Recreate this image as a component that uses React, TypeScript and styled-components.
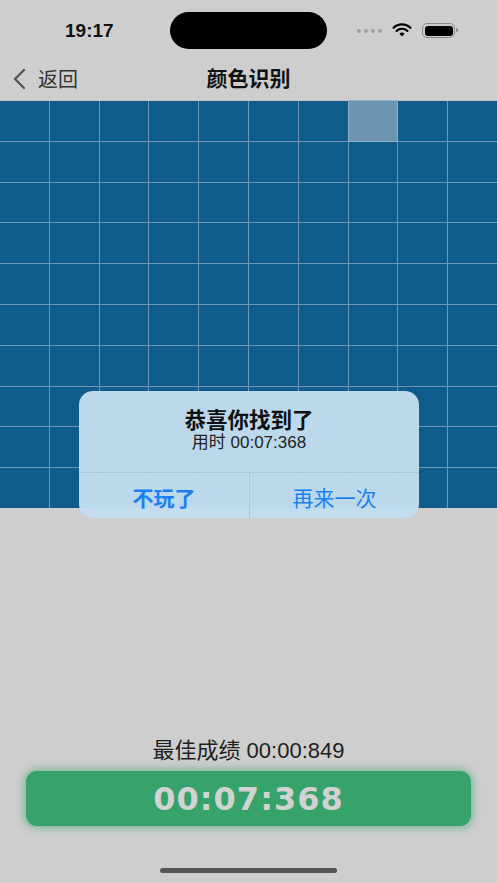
import styled, { createGlobalStyle } from 'styled-components'

const GlobalStyle = createGlobalStyle`
  html, body {
    margin: 0;
    padding: 0;
    background: #cecece;
  }
  * {
    box-sizing: border-box;
  }
`

const FONT = `"Liberation Sans", "Noto Sans CJK SC", sans-serif`

const ROWS = 10
const COLS = 10
const TARGET = { row: 0, col: 7 }

const App = () => {
  const cells = []
  for (let r = 0; r < ROWS; r++) {
    for (let c = 0; c < COLS; c++) {
      cells.push(
        <Cell key={`${r}-${c}`} $target={r === TARGET.row && c === TARGET.col} />
      )
    }
  }

  return (
    <>
      <GlobalStyle />
      <Screen>
        <StatusBar>
          <Clock>19:17</Clock>
          <Island />
          <StatusIcons>
            <Dots>
              <i />
              <i />
              <i />
              <i />
            </Dots>
            <svg width="20" height="15" viewBox="0 0 20 15">
              <path d="M10 13.5l2.6-2.8a3.8 3.8 0 0 0-5.2 0z" fill="#000" />
              <path
                d="M4.6 7.9a7.8 7.8 0 0 1 10.8 0"
                stroke="#000"
                strokeWidth="2.2"
                fill="none"
                strokeLinecap="round"
              />
              <path
                d="M1.6 4.8a12 12 0 0 1 16.8 0"
                stroke="#000"
                strokeWidth="2.2"
                fill="none"
                strokeLinecap="round"
              />
            </svg>
            <Battery>
              <span />
            </Battery>
          </StatusIcons>
        </StatusBar>

        <NavBar>
          <BackButton>
            <svg width="16" height="22" viewBox="0 0 16 22">
              <path
                d="M13 2L4 11l9 9"
                stroke="#555"
                strokeWidth="2.4"
                fill="none"
                strokeLinecap="round"
                strokeLinejoin="round"
              />
            </svg>
            <span>返回</span>
          </BackButton>
          <NavTitle>颜色识别</NavTitle>
        </NavBar>

        <Board>
          <Grid>{cells}</Grid>
          <Alert>
            <AlertBody>
              <AlertTitle>恭喜你找到了</AlertTitle>
              <AlertMessage>用时 00:07:368</AlertMessage>
            </AlertBody>
            <AlertActions>
              <AlertButton $bold>不玩了</AlertButton>
              <AlertButton>再来一次</AlertButton>
            </AlertActions>
          </Alert>
        </Board>

        <Footer>
          <BestScore>最佳成绩 00:00:849</BestScore>
          <TimerButton>00:07:368</TimerButton>
        </Footer>
        <HomeIndicator />
      </Screen>
    </>
  )
}

export default App

const Screen = styled.div`
  width: 497px;
  height: 883px;
  background: #cecece;
  display: flex;
  flex-direction: column;
  font-family: ${FONT};
  overflow: hidden;
`

const StatusBar = styled.div`
  height: 58px;
  display: flex;
  align-items: center;
  padding: 0 42px 0 65px;
`

const Clock = styled.span`
  font-size: 19px;
  font-weight: 700;
  color: #111;
  width: 105px;
  padding-top: 4px;
`

const Island = styled.div`
  width: 157px;
  height: 37px;
  border-radius: 19px;
  background: #000;
  margin-top: 3px;
`

const StatusIcons = styled.div`
  margin-left: auto;
  display: flex;
  align-items: center;
  gap: 10px;
  padding-top: 3px;
`

const Dots = styled.div`
  display: flex;
  gap: 3px;

  i {
    width: 4px;
    height: 4px;
    border-radius: 50%;
    background: #a0a0a0;
  }
`

const Battery = styled.div`
  width: 33px;
  height: 15px;
  border: 1.5px solid #8a8a8a;
  border-radius: 5px;
  padding: 1.5px;
  position: relative;

  span {
    display: block;
    width: 100%;
    height: 100%;
    background: #000;
    border-radius: 3px;
  }

  &::after {
    content: '';
    position: absolute;
    right: -4px;
    top: 4px;
    width: 2px;
    height: 4px;
    border-radius: 0 2px 2px 0;
    background: #8a8a8a;
  }
`

const NavBar = styled.div`
  height: 42px;
  position: relative;
  display: flex;
  align-items: center;
  justify-content: center;
  padding-bottom: 4px;
`

const BackButton = styled.div`
  position: absolute;
  left: 11px;
  top: 6px;
  display: flex;
  align-items: center;
  gap: 11px;
  font-size: 20px;
  color: #333;
`

const NavTitle = styled.div`
  font-size: 21px;
  font-weight: 700;
  color: #111;
`

const Board = styled.div`
  position: relative;
  border-top: 1px solid #c0c0c0;
`

const Grid = styled.div`
  display: grid;
  grid-template-columns: repeat(${COLS}, 1fr);
  grid-template-rows: repeat(${ROWS}, 1fr);
  gap: 1px;
  height: 407px;
  background: #6f95b3;
`

const Cell = styled.div<{ $target?: boolean }>`
  background: ${(p) => (p.$target ? '#6e95b0' : '#0f5b8b')};
  box-shadow: ${(p) => (p.$target ? '0 0 0 1px #8fb0c8' : 'none')};
`

const Alert = styled.div`
  position: absolute;
  left: 79px;
  top: 290px;
  width: 340px;
  border-radius: 14px;
  background: rgba(194, 221, 238, 0.97);
  overflow: hidden;
`

const AlertBody = styled.div`
  height: 82px;
  display: flex;
  flex-direction: column;
  align-items: center;
  padding-top: 18px;
  border-bottom: 1px solid #a9c8dc;
`

const AlertTitle = styled.div`
  font-size: 21.5px;
  line-height: 24px;
  font-weight: 700;
  color: #111;
`

const AlertMessage = styled.div`
  font-size: 17px;
  line-height: 20px;
  color: #222;
`

const AlertActions = styled.div`
  display: grid;
  grid-template-columns: 1fr 1fr;
  height: 45px;

  & > * + * {
    border-left: 1px solid #a9c8dc;
  }
`

const AlertButton = styled.div<{ $bold?: boolean }>`
  display: flex;
  align-items: center;
  justify-content: center;
  font-size: 21px;
  font-weight: ${(p) => (p.$bold ? 700 : 400)};
  color: #1a80f2;
  padding-top: 2px;
`

const Footer = styled.div`
  margin-top: auto;
  display: flex;
  flex-direction: column;
  align-items: center;
  gap: 8px;
  padding: 0 26px;
`

const BestScore = styled.div`
  font-size: 22px;
  color: #1e1e1e;
  line-height: 24px;
`

const TimerButton = styled.div`
  width: 100%;
  height: 55px;
  border-radius: 11px;
  background: #36a36a;
  box-shadow: 0 0 8px 2px rgba(54, 163, 106, 0.55);
  display: flex;
  align-items: center;
  justify-content: center;
  font-family: "DejaVu Sans", sans-serif;
  font-size: 32px;
  font-weight: 700;
  color: #d2d2d2;
  letter-spacing: 1px;
`

const HomeIndicator = styled.div`
  width: 177px;
  height: 5px;
  border-radius: 3px;
  background: #555;
  margin: 42px auto 10px;
`
